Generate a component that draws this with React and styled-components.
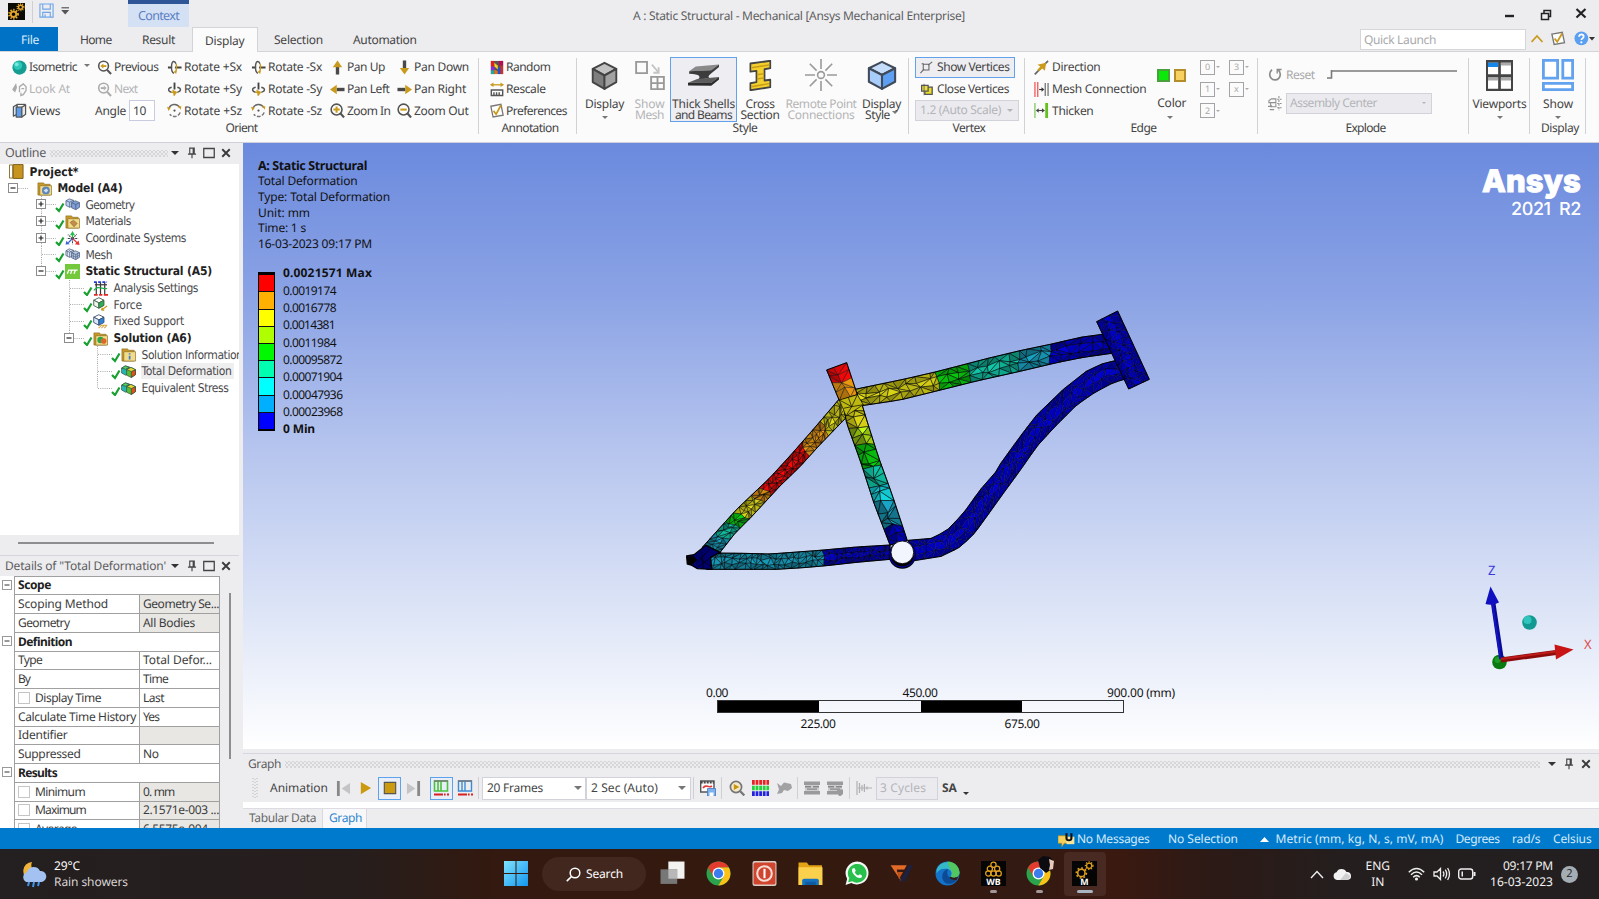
import React, { useLayoutEffect, useRef, useState } from "react";
import styled, { createGlobalStyle, css } from "styled-components";

const UI = `"Noto Sans", "Open Sans", sans-serif`;
const TREE = `"DejaVu Sans Condensed", "DejaVu Sans", sans-serif`;

const GlobalStyle = createGlobalStyle`
  html, body { margin: 0; padding: 0; overflow: hidden; }
  * { box-sizing: border-box; }
  body { font-family: ${UI}; font-size: 12px; color: #444; text-rendering: geometricPrecision; }
  svg { display: block; flex: none; }
`;

/* ---------- text ---------- */
const Span = styled.span`
  display: inline-block;
  flex: none;
  white-space: nowrap;
  line-height: ${(p) => p.$lh || 12}px;
  font-size: ${(p) => p.$size || 12}px;
  font-weight: ${(p) => (p.$bold ? 700 : p.$weight || 400)};
  font-family: ${(p) => p.$font || UI};
  color: ${(p) => p.$color || "inherit"};
  word-spacing: ${(p) => p.$ws || 0}px;
  ${(p) => p.$stroke && css`-webkit-text-stroke: ${p.$stroke}px #fff;`}
`;

/* Tracks the letters so that a label takes exactly its allotted width. */
function Text({ w, children, ...rest }) {
  const ref = useRef(null);
  const [spacing, setSpacing] = useState(0);
  useLayoutEffect(() => {
    if (!w || !ref.current) return;
    const n = String(children).length;
    setSpacing((w - ref.current.getBoundingClientRect().width) / n);
  }, [w, children]);
  return (
    <Span ref={ref} style={{ letterSpacing: `${spacing}px` }} {...rest}>
      {children}
    </Span>
  );
}

/* ---------- shell ---------- */
const Window = styled.div`
  width: 1599px;
  height: 899px;
  display: flex;
  flex-direction: column;
  overflow: hidden;
  background: #ededf0;
`;
const TitleBar = styled.header`
  height: 27px;
  display: flex;
  flex: none;
  background: #ededf0;
`;
const QuickAccess = styled.div`
  width: 128px;
  display: flex;
  align-items: flex-start;
  padding: 3px 0 0 8px;
`;
const ThinLine = styled.i`
  width: 1px;
  height: ${(p) => p.$h}px;
  margin: ${(p) => p.$m || "0"};
  background: #cfcfd4;
  flex: none;
`;
const ContextTab = styled.div`
  width: 61px;
  border-top: 4px solid #2d5597;
  background: #d4e1f5;
  padding-left: 10px;
  display: flex;
  align-items: center;
`;
const TitleText = styled.div`
  flex: 1;
  padding: 6.5px 0 0 444px;
`;
const WinButtons = styled.div`
  width: 96px;
  padding-top: 7px;
`;
const TabStrip = styled.nav`
  height: 25px;
  flex: none;
  display: flex;
  border-bottom: 1px solid #d4d4d8;
`;
const Tab = styled.div`
  width: ${(p) => p.$w}px;
  padding: 1.5px 0 0 ${(p) => p.$pad}px;
  height: 25px;
  display: flex;
  align-items: center;
  ${(p) => p.$file && css`background: #0072c6; color: #dcebf8; height: 24px;`}
  ${(p) => p.$active && css`background: #fbfbfb; border: 1px solid #d4d4d8; border-bottom: 0;`}
`;
const QuickLaunch = styled.div`
  width: 166px;
  height: 21px;
  margin: 2px 5px 0 auto;
  background: #fff;
  border: 1px solid #d6d6da;
  padding-left: 3px;
  display: flex;
  align-items: center;
`;
const TabTools = styled.div`
  width: 68px;
  padding-top: 3px;
`;

/* ---------- ribbon ---------- */
const RibbonBar = styled.section`
  height: 90px;
  flex: none;
  display: flex;
  background: #fbfbfb;
`;
const Group = styled.div`
  width: ${(p) => p.$w}px;
  flex: none;
  padding-top: 4.5px;
  display: flex;
  flex-direction: column;
  position: relative;
  &::after {
    content: "";
    position: absolute;
    right: 0;
    top: 6px;
    width: 1px;
    height: 76px;
    background: #d2d2d6;
  }
`;
const GroupBody = styled.div`
  height: 65px;
  display: flex;
  padding-left: ${(p) => p.$pl || 0}px;
`;
const GroupLabel = styled.div`
  height: 13px;
  padding-left: 4px;
  display: flex;
  justify-content: center;
  align-items: center;
`;
const OrientGrid = styled.div`
  display: grid;
  grid-template-columns: 85px 70px 84px 79px 67px 74px;
  grid-template-rows: repeat(3, 21.7px);
`;
const Stack = styled.div`
  display: flex;
  flex-direction: column;
  width: ${(p) => p.$w || "auto"};
`;
const Cmd = styled.div`
  height: 21.7px;
  width: ${(p) => (p.$w ? p.$w + "px" : "auto")};
  display: flex;
  align-items: center;
  gap: ${(p) => p.$gap ?? 2}px;
  color: ${(p) => (p.$off ? "#b4b4b6" : "#444")};
  padding-left: ${(p) => p.$pl || 0}px;
  margin-left: ${(p) => p.$ml || 0}px;
  ${(p) => p.$off && css`svg { opacity: 0.6; }`}
  ${(p) => p.$on && css`background: #ededf2; outline: 1px solid #62a2ec; outline-offset: -1px; height: 21px; margin-bottom: 0.7px;`}
`;
const AngleInput = styled.div`
  width: 26px;
  height: 21px;
  margin-left: 1px;
  border: 1px solid #c9cce0;
  background: #fff;
  padding-left: 3px;
  display: flex;
  align-items: center;
`;
const BigButton = styled.div`
  width: ${(p) => p.$w}px;
  height: 65px;
  flex: none;
  display: flex;
  flex-direction: column;
  align-items: center;
  color: ${(p) => (p.$off ? "#b4b4b6" : "#444")};
  ${(p) => p.$on && css`background: #ededf2; outline: 1px solid #62a2ec; outline-offset: -1px;`}
`;
const BigIcon = styled.div`
  height: 41px;
  display: flex;
  align-items: center;
  padding-bottom: 4px;
`;
const BigLine = styled.div`
  height: 11.5px;
  display: flex;
  align-items: center;
  gap: 2px;
`;
const Arrow = styled.i`
  width: 0;
  height: 0;
  flex: none;
  margin: ${(p) => p.$m || "0"};
  border: ${(p) => p.$s || 3}px solid transparent;
  border-top: ${(p) => p.$s || 3}px solid ${(p) => p.$c || "#777"};
  border-bottom: 0;
`;
const Combo = styled.div`
  width: ${(p) => p.$w}px;
  height: ${(p) => p.$h || 21}px;
  flex: none;
  display: flex;
  align-items: center;
  justify-content: space-between;
  padding: 0 5px 0 ${(p) => p.$pl || 4}px;
  border: 1px solid #d2d2da;
  background: ${(p) => (p.$off ? "#ebebef" : "#fff")};
  color: ${(p) => (p.$off ? "#b4b4b8" : "#444")};
`;
const ColorColumn = styled.div`
  width: 43px;
  padding-top: 12.5px;
  display: flex;
  flex-direction: column;
  align-items: flex-start;
`;
const Swatches = styled.div`
  display: flex;
  gap: 4px;
  margin-bottom: 15.5px;
`;
const Swatch = styled.i`
  width: 12.5px;
  height: 12.5px;
  background: ${(p) => p.$c};
  border: 2px solid ${(p) => p.$b};
`;
const MiniGrid = styled.div`
  display: grid;
  grid-template-columns: 29px 29px;
  grid-template-rows: repeat(3, 21.7px);
  align-items: center;
`;
const Mini = styled.div`
  display: flex;
  align-items: center;
  gap: 1px;
`;
const MiniBox = styled.div`
  width: 15px;
  height: 15px;
  border: 1px solid #a4a4a6;
  display: flex;
  align-items: center;
  justify-content: center;
`;
const ExplodeRow = styled.div`
  display: flex;
  align-items: center;
  height: ${(p) => p.$h}px;
  margin-top: ${(p) => p.$mt || 0}px;
`;

/* ---------- docked panels ---------- */
const Work = styled.main`
  flex: none;
  height: 686px;
  display: flex;
  border-top: 1px solid #cfd0dc;
`;
const Side = styled.aside`
  width: 243px;
  flex: none;
  display: flex;
  flex-direction: column;
  background: #ededf0;
`;
const PanelHead = styled.div`
  height: ${(p) => p.$h || 21}px;
  width: ${(p) => p.$w || "100%"};
  flex: none;
  display: flex;
  align-items: center;
  padding-left: 5px;
  border-top: ${(p) => (p.$line ? "1px solid #d6d6e0" : "0")};
  color: #5d5d60;
`;
const Dots = styled.i`
  height: 7px;
  flex: ${(p) => (p.$w ? "none" : 1)};
  width: ${(p) => (p.$w ? p.$w + "px" : "auto")};
  margin: ${(p) => p.$m || "0 0 0 4px"};
  background-image: radial-gradient(circle, #bcbcc0 0.5px, transparent 0.9px),
    radial-gradient(circle, #bcbcc0 0.5px, transparent 0.9px);
  background-size: 4px 4px;
  background-position: 0 0, 2px 2px;
`;
const TreePane = styled.div`
  height: 371.5px;
  width: 239px;
  background: #fff;
  overflow: hidden;
`;
const TreeRow = styled.div`
  height: ${(p) => p.$h || 16.66}px;
  display: flex;
  align-items: center;
  padding-left: ${(p) => p.$level * 28}px;
`;
const TreeText = styled.div`
  margin-left: 4.5px;
  padding: 0 2px 0 1px;
  height: 16px;
  flex: none;
  display: flex;
  align-items: center;
  background: ${(p) => (p.$sel ? "#efeff0" : "transparent")};
`;
const HScroll = styled.div`
  height: 19.5px;
  flex: none;
  padding: 7px 0 0 18px;
  &::after {
    content: "";
    display: block;
    width: 196px;
    height: 2px;
    background: #8e8e90;
  }
`;
const DetailsBody = styled.div`
  flex: 1;
  display: flex;
  overflow: hidden;
`;
const DetailsTable = styled.div`
  width: 220px;
  background: #fff;
`;
const VScroll = styled.div`
  width: 2px;
  height: 166px;
  margin: 17px 0 0 9px;
  background: #8e8e90;
`;
const DetailRow = styled.div`
  height: 18.75px;
  display: grid;
  grid-template-columns: 14px 125px 81px;
  color: #3c3c3c;
`;
const Gutter = styled.div`
  display: flex;
  align-items: center;
  padding-left: 2px;
`;
const Cell = styled.div`
  border: 1px solid #a0a0a0;
  border-width: 1px 0 0 1px;
  ${(p) => p.$last && css`border-right-width: 1px;`}
  ${(p) => p.$span && css`grid-column: 2 / 4;`}
  padding-left: 3px;
  display: flex;
  align-items: center;
  overflow: hidden;
  background: ${(p) => (p.$gray ? "#e8e7e4" : "#fff")};
`;
const CheckBox = styled.i`
  width: 12px;
  height: 12px;
  flex: none;
  border: 1px solid #c4c4c4;
  margin-right: 5px;
`;

/* ---------- viewport ---------- */
const Right = styled.div`
  flex: 1;
  display: flex;
  flex-direction: column;
`;
const Viewport = styled.div`
  height: 606px;
  flex: none;
  position: relative;
  background: linear-gradient(#6b8ade 0%, #8ba3e5 25%, #b5c4ee 50%, #dbe3f6 76%, #fff 100%);
  color: #111;
`;
const Info = styled.div`
  padding: 15px 0 0 15px;
  display: flex;
  flex-direction: column;
`;
const InfoLine = styled.div`
  height: 15.6px;
  display: flex;
  align-items: center;
`;
const Legend = styled.div`
  display: flex;
  margin: 20.5px 0 0 15px;
`;
const Bands = styled.div`
  width: 17px;
  height: 159px;
  border: 1px solid #000;
  border-width: 3px 1px 2px 1px;
  display: flex;
  flex-direction: column;
  margin-top: 0;
`;
const Band = styled.i`
  flex: 1;
  background: ${(p) => p.$c};
  & + & { border-top: 1px solid #111; }
`;
const LegendLabels = styled.div`
  margin: -7.5px 0 0 8px;
  display: flex;
  flex-direction: column;
`;
const LegendLine = styled.div`
  height: 17.35px;
  display: flex;
  align-items: center;
`;
const Brand = styled.div`
  position: absolute;
  right: 18px;
  top: 21px;
  display: flex;
  flex-direction: column;
  align-items: flex-end;
  color: #fff;
`;
const CanvasItem = styled.div`
  position: absolute;
  left: ${(p) => p.$x}px;
  top: ${(p) => p.$y}px;
`;
const Ruler = styled.div`
  width: 480px;
`;
const RulerTop = styled.div`
  display: flex;
  height: 14px;
  align-items: center;
`;
const RulerBar = styled.div`
  margin: 0 0 4px 11px;
  width: 407px;
  height: 13px;
  display: flex;
  border: 1px solid #333;
  i { flex: 1; }
  i:nth-child(odd) { background: #000; }
`;
const Gap = styled.i`
  width: ${(p) => p.$w}px;
  flex: none;
`;

/* ---------- graph dock ---------- */
const GraphDock = styled.div`
  flex: 1;
  display: flex;
  flex-direction: column;
  padding-top: 4px;
`;
const AnimBar = styled.div`
  height: 28px;
  display: flex;
  align-items: center;
`;
const Toggle = styled.div`
  width: 23px;
  height: 23px;
  flex: none;
  display: flex;
  align-items: center;
  justify-content: center;
  ${(p) => p.$on && css`background: #e9eef8; outline: 1px solid #5da2ec; outline-offset: -1px;`}
`;
const WhiteBand = styled.div`
  height: 6px;
  background: #fff;
`;
const DockTabs = styled.div`
  height: 20px;
  display: flex;
  border-top: 1px solid #dcdce2;
  color: #666;
`;
const DockTab = styled.div`
  width: ${(p) => p.$w}px;
  padding: 0 0 1.5px 6px;
  display: flex;
  align-items: center;
  ${(p) => p.$on && css`background: #f8f8fa; color: #2e86cf; border: 1px solid #d8d8de; border-width: 0 1px;`}
`;

/* ---------- status and taskbar ---------- */
const StatusBar = styled.footer`
  height: 21px;
  flex: none;
  display: flex;
  align-items: center;
  background: #007acc;
  color: #d6eafb;
  padding: 1px 0 0 1058px;
`;
const Taskbar = styled.footer`
  height: 50px;
  flex: none;
  display: flex;
  background: linear-gradient(90deg, #241f20 0%, #261e1d 22%, #33190f 31%, #34190f 52%, #331a12 64%, #3a1910 70%, #2c1a16 76%, #241e1e 84%, #231f20 100%);
  color: #fff;
`;
const Weather = styled.div`
  width: 504px;
  padding: 0 0 0 20px;
  display: flex;
  align-items: center;
  gap: 7px;
`;
const TwoLines = styled.div`
  display: flex;
  flex-direction: column;
  align-items: ${(p) => p.$align || "flex-start"};
  gap: 4.5px;
`;
const SearchPill = styled.div`
  width: 104px;
  height: 34px;
  border-radius: 17px;
  margin: 8px 4px 0 14px;
  background: #42271f;
  display: flex;
  align-items: center;
  padding-left: 24px;
  gap: 5px;
`;
const TaskSlot = styled.div`
  width: ${(p) => p.$w || 45.8}px;
  height: 50px;
  display: flex;
  flex-direction: column;
  align-items: center;
  padding-top: 12px;
  gap: 4px;
`;
const Running = styled.i`
  width: ${(p) => p.$w || 7}px;
  height: 3px;
  border-radius: 2px;
  background: ${(p) => (p.$w ? "#a9b6c0" : "#a2989a")};
`;
const RunningIcon = styled.div`
  height: 25px;
  display: flex;
  align-items: flex-end;
`;
const ActiveTile = styled.div`
  width: 42px;
  height: 44px;
  margin-top: 3px;
  margin-left: 1.5px;
  border-radius: 4px;
  background: #482a22;
  display: flex;
  flex-direction: column;
  align-items: center;
  padding-top: 9px;
  gap: 4px;
`;
const Tray = styled.div`
  display: flex;
  align-items: center;
  margin-left: auto;
  padding-right: 21px;
  color: #f2f2f2;
`;
const Badge = styled.div`
  width: 17px;
  height: 17px;
  border-radius: 50%;
  background: #a3adb3;
  color: #222;
  display: flex;
  align-items: center;
  justify-content: center;
  margin-left: 8px;
`;

/* ---------- icons ---------- */
const G = "#555";
const Y = "#c99a1c";
const gear = (cx, cy, r, c, sw = 2) => (
  <g stroke={c} fill="none" strokeWidth={sw}>
    <circle cx={cx} cy={cy} r={r} />
    <circle cx={cx} cy={cy} r={r + sw * 0.9} strokeDasharray={`${r * 0.5} ${r * 0.55}`} />
  </g>
);
const cube = (a, b, c, s = "#444", w = 1) => (
  <g stroke={s} strokeWidth={w} strokeLinejoin="round">
    <path d="M8 1 15 4.4 8 8 1 4.4Z" fill={a} />
    <path d="M1 4.4 8 8V15.4L1 11.6Z" fill={b} />
    <path d="M15 4.4 8 8V15.4L15 11.6Z" fill={c} />
  </g>
);
const blocks = (a, b) => (
  <g stroke="#4a5c7c" strokeWidth=".8" strokeLinejoin="round">
    <path d="M1 4 4.5 2 9 3.5 9 9 5 11 1 9Z" fill={a} />
    <path d="M1 4 5 5.5 9 3.5M5 5.5V11" fill="none" />
    <path d="M7 6 11 4 15.5 6 15.5 11 11.5 13.5 7 11.5Z" fill={b} />
    <path d="M7 6 11.5 8 15.5 6M11.5 8V13.5" fill="none" />
  </g>
);
const folder = (inner) => (
  <g>
    <path d="M1 2H7L8 3.5H14V15H1Z" fill="#c99a2a" stroke="#8a6a1c" strokeWidth=".7" />
    <path d="M3 5H15.5V15H3Z" fill="#f1dc8c" stroke="#8a6a1c" strokeWidth=".7" />
    {inner}
  </g>
);
const ICONS = {
  gears: <g><rect width="16" height="16" fill="#0c0a05" />{gear(5.2, 10.6, 2.6, "#e0a52c", 1.8)}{gear(11.8, 4, 1.9, "#e0a52c", 1.4)}</g>,
  save: <g fill="none" stroke="#6fa5e8" strokeWidth="1.2"><path d="M1 1H15V15H1Z" /><path d="M4 1V6.5H12V1M4 15V10H12V15M6.5 12V15" /></g>,
  sphere: <g><circle cx="8" cy="8" r="7.6" fill="#159d92" /><circle cx="6.2" cy="5.8" r="4.6" fill="#2cc9bb" /><circle cx="5" cy="4.6" r="2" fill="#7fe6dc" /></g>,
  lookat: <g fill="none" stroke="#777" strokeWidth="1.4"><path d="M1 8 4 3 4.6 6 3 10Z" fill="#777" /><path d="M8 11V5L12 2 15 5V9L12 13.5 9.500 14.500V11.500M10 7 13 7" /></g>,
  views: <g stroke="#555" strokeWidth="1.3" strokeLinejoin="round"><path d="M1.5 4 5.5 1.5V12L1.5 14Z" fill="#d8e6fa" /><path d="M4.5 4.5H10.5V15H4.5Z" fill="#5a9cf0" /><path d="M10.5 4.5 14.5 2V12L10.5 15Z" fill="#e8e8ea" /><path d="M5.5 1.5H14.5" /></g>,
  prev: <g fill="none" stroke={G} strokeWidth="1.7"><circle cx="7" cy="6.5" r="5.2" fill="#fff" /><path d="M10.8 10.5 15 15" strokeWidth="2.2" /><path d="M10 6.5H6" stroke={Y} strokeWidth="2" /><path d="M3.6 6.5 6.8 3.8V9.2Z" fill={Y} stroke="none" /></g>,
  next: <g fill="none" stroke="#777" strokeWidth="1.7"><circle cx="7" cy="6.5" r="5.2" /><path d="M10.8 10.5 15 15" strokeWidth="2.2" /><path d="M4 6.5H8" strokeWidth="2" /><path d="M10.4 6.5 7.2 3.8V9.2Z" fill="#888" stroke="none" /></g>,
  rotx: <g fill="none" strokeWidth="1.5"><path d="M1 8H5.5M8.5 8H15.5" stroke="#444" strokeWidth="2" /><path d="M9.5 4C8.5.6 5.8.6 5 4.6 4.4 9 5 13 7.4 14.2" stroke={G} /><path d="M9.8 4C10.6 7 10 12 8.6 13.4" stroke={Y} /><path d="M10.6 11 7 12.4 9.8 15Z" fill={Y} /></g>,
  roty: <g fill="none" strokeWidth="1.5"><path d="M8 .6V8" stroke="#444" strokeWidth="2" /><path d="M5 5.6C.6 6.6.6 9.6 5 11" stroke={G} /><path d="M11 5.6C15.6 6.8 15.4 9.8 11 11" stroke={G} /><path d="M4.6 11H10" stroke={Y} /><path d="M6 8.6 10.6 11 7.5 14.8Z" fill={Y} stroke={Y} strokeWidth=".6" /></g>,
  rotz: <g fill="none" strokeWidth="1.6"><path d="M2 6A6.3 6.3 0 0 1 13.6 5" stroke="#666" /><path d="M14 10A6.3 6.3 0 0 1 3 12" stroke="#777" strokeDasharray="4 1.6" /><circle cx="8" cy="8" r="1.2" fill="#555" stroke="none" /><path d="M0 4 4 5 1.6 8.4Z" fill={Y} /><path d="M11.6 3 15.4 3.6 14.6 7.2Z" fill={Y} /></g>,
  up: <g><path d="M6.2 7H9.8V15.5H6.2Z" fill="#4a4a4a" /><path d="M8 .5 13 7.6H3Z" fill={Y} /></g>,
  down: <g><path d="M6.2 .5H9.8V9H6.2Z" fill="#4a4a4a" /><path d="M8 15.5 13 8.4H3Z" fill={Y} /></g>,
  left: <g><path d="M7 6.2H15.5V9.8H7Z" fill="#4a4a4a" /><path d="M0 8 7.2 3V13Z" fill={Y} /></g>,
  right: <g><path d="M.5 6.2H9V9.8H.5Z" fill="#4a4a4a" /><path d="M16 8 8.8 3V13Z" fill={Y} /></g>,
  zin: <g fill="none" stroke={G} strokeWidth="1.7"><circle cx="7" cy="7" r="5.8" fill="#fff" /><path d="M11 11 15 15.4" strokeWidth="2.3" /><path d="M3.6 7H10.4M7 3.6V10.4" stroke={Y} strokeWidth="2.2" /></g>,
  zout: <g fill="none" stroke={G} strokeWidth="1.7"><circle cx="7" cy="7" r="5.8" fill="#fff" /><path d="M11 11 15 15.4" strokeWidth="2.3" /><path d="M3.6 7H10.4" stroke={Y} strokeWidth="2.2" /></g>,
  random: <g><rect x="1" y="1" width="14" height="14" fill="#555" /><path d="M1 1H5V7H1Z" fill="#e02020" /><path d="M1 7H5V11H1Z" fill="#8a2be2" /><path d="M1 11H5V15H1Z" fill="#2a9" /><path d="M5 3 9 6V10L5 7Z" fill="#f0d020" /><path d="M5 10 9 12V15H5Z" fill="#e07020" /><path d="M10 1H15V6H10Z" fill="#b01050" /><path d="M9 8H12V15H9Z" fill="#2050d0" /><path d="M12 6H15V15H12Z" fill="#cc3030" /></g>,
  rescale: <g fill="none"><path d="M1 3H15" stroke={Y} strokeWidth="1.4" /><path d="M0 3 4 .6V5.4ZM16 3 12 .6V5.4Z" fill={Y} /><path d="M1.5 8.5H14.5V14.5H1.5ZM4.5 14V11M7.5 14V11M10.5 14V11" stroke={G} strokeWidth="1.6" /></g>,
  prefs: <g fill="none"><path d="M1 3.5 12.5 1.5 15 13 3.5 15Z" stroke="#777" strokeWidth="1.5" fill="#fff" /><path d="M4 8.5 7 12 12.5 2.5" stroke={Y} strokeWidth="2" /></g>,
  bigcube: cube("#c2c2c2", "#7e7e7e", "#a2a2a2", "#444", 1.1),
  bluecube: cube("#c5ddfb", "#a9cdfb", "#5d9ff2", "#404a58", 1.1),
  showmesh: <g fill="none" stroke="#999" strokeWidth="1"><path d="M.6 1H6.4V7H.6ZM8.6 9H15.4V15.6H8.6ZM12 9V15.6M8.6 12.3H15.4" /><path d="M9 2.5 12.4 6.4M12.6 3.8V6.8H9.8" stroke="#c4c4c4" /></g>,
  beam: <g><path d="M4 2.200 16 1 12 4.600 .6 5.200Z" fill="#8a8a8a" /><path d="M.6 5.200 12 4.600 16 1V2.600L11.600 7C10.400 8.200 10.400 8.800 11 9.600L5 10.800C6.800 8.800 6.400 7 .6 6.800Z" fill="#3c3c3c" /><path d="M0 12.600 4.800 10.200 16 9 11.800 12.800Z" fill="#5c5c5c" /><path d="M0 12.600 11.800 12.800 16 9V10.600L12 14.600 0 14.400Z" fill="#2c2c2c" /></g>,
  cross: <g stroke="#444" strokeWidth="1" strokeLinejoin="round"><path d="M2 1.8 13.8.4V4.2L10.4 4.8V10.6L13.8 10.2V14L2 15.6V12L5.6 11.4V5.6L2 6Z" fill="#f2cf2c" /><path d="M2.6 4 13 2.6M5.8 7.6 10.2 7M5.8 9.8 10.2 9.2M2.6 13.8 13 12.2" stroke="#c79b15" strokeWidth=".7" /></g>,
  remote: <g stroke="#9a9a9a" fill="none" strokeWidth=".8"><circle cx="8" cy="8" r="1.7" /><path d="M8 0V5M8 11V16M0 8H5M11 8H16M2.4 2.4 5.8 5.8M10.2 10.2 13.6 13.6M13.6 2.4 10.2 5.8M2.4 13.6 5.8 10.2" /></g>,
  showv: <g fill="none" stroke="#666" strokeWidth="1.3"><path d="M4 4H11V11H4Z" /><path d="M10 5 15 1M.5 15 5 10M2 3.5H4.5" /></g>,
  closev: <g><path d="M6 5H15V14H6Z" fill="#e9dc28" stroke="#555" strokeWidth="1.6" /><path d="M2 3H10V10H2Z" fill="#eee04a" stroke="#555" strokeWidth="1.6" /><path d="M5 1V15" stroke="#555" /></g>,
  direction: <g><path d="M.8 15.4 15 1" stroke="#666" strokeWidth="1.8" /><path d="M13 3 11.6 11.4 8.8 9 5.4 12 3.6 10.4 6.8 7 3.6 5Z" fill={Y} /></g>,
  meshcon: <g><path d="M1 0V16M4 0V16" stroke="#f05050" strokeWidth="1.3" /><path d="M12 1V15M15 1V15" stroke="#777" strokeWidth="1.4" /><path d="M5.5 8H9" stroke="#333" strokeWidth="1.2" /><path d="M11 8 8 5.5V10.5Z" fill="#333" /></g>,
  thicken: <g><path d="M1 0V16" stroke="#6fc040" strokeWidth="1.2" /><path d="M13.5 0V16" stroke="#64c01c" strokeWidth="3" /><path d="M3 8H11" stroke="#444" strokeWidth="1.2" /><path d="M2 8 5 5.5V10.5ZM11.5 8 8.5 5.5V10.5Z" fill="#444" /></g>,
  reset: <g fill="none" stroke="#8a8a8a" strokeWidth="1.9"><path d="M11.8 3.2A6 6 0 1 1 4.6 2.9" /><path d="M10.5 7V2.6H15.5" strokeWidth="1.5" /></g>,
  assembly: <g fill="none" stroke="#8f8f8f" strokeWidth="1.2"><path d="M1 5 4 3H9V7H1ZM3 7.500V11.500H9V8M2 14.500H7M0 11H4.500M4.500 11 2.500 9" /><path d="M12.500 0V16" strokeDasharray="2.5 1.4" /><path d="M10.500 3.500H16M10.500 8H16M10.500 12.500H16" strokeDasharray="2 1" /></g>,
  viewports: <g><rect x="0" y="0" width="16" height="16" fill="#444" /><path d="M1.2 1.4H7.2V7.4H1.2ZM8.8 1.4H14.8V7.4H8.8ZM1.2 9H7.2V14.8H1.2ZM8.8 9H14.8V14.8H8.8Z" fill="#fff" /><path d="M1.2 1.4H7.2V3.6H1.2Z" fill="#1687ea" /><path d="M8.8 1.4H14.8V2.8H8.8ZM1.2 9H7.2V10.6H1.2ZM8.8 9H14.8V10.6H8.8Z" fill="#aaa" /></g>,
  showpanel: <g fill="#fff" stroke="#62a2ee" strokeWidth="1.4"><path d="M.7.7H7.8V9.6H.7ZM10.4.7H15.3V9.6H10.4ZM.7 12.2H15.3V15.3H.7Z" /></g>,
  help: <g><circle cx="8" cy="8" r="7.5" fill="#5a9ff0" /><path d="M5.5 6.2C5.5 2.8 10.7 3 10.5 6.2 10.3 8 8 8 8 9.8" fill="none" stroke="#fff" strokeWidth="1.9" /><circle cx="8" cy="12.3" r="1.2" fill="#fff" /></g>,
  pin: <g fill="none" stroke="#444" strokeWidth="1.5"><path d="M5 1.5H11V9H5ZM9.6 1.5V9M2.6 9.5H13.4M8 9.5V15" /></g>,
  max: <path d="M1 2H15V14H1Z" fill="none" stroke="#444" strokeWidth="1.7" />,
  close: <path d="M2 2 14 14M14 2 2 14" stroke="#3a3a3a" strokeWidth="3" />,
  book: <g><path d="M.5 1H4V15H.5Z" fill="#fff" stroke="#8a6a1c" /><path d="M4.5 .6H15V15.4H4.5Z" fill="#c6941f" stroke="#7a5c18" /></g>,
  model: folder(<g><circle cx="9.5" cy="10" r="4.2" fill="#5e86b8" /><path d="M7 10 10 8 12 10 9.6 12.4Z" fill="#cfe0f4" /></g>),
  geom: blocks("#b9cdf0", "#7f9fd8"),
  material: folder(<path d="M5.5 9 9 6.6 13 10 9.6 13.6Z" fill="#c88c4a" stroke="#7a5a2a" strokeWidth=".6" />),
  coord: <g strokeWidth="1.3" fill="none"><path d="M8 8V3" stroke="#1cbf4c" /><path d="M8 0 10.600 4.500H5.400Z" fill="#1cbf4c" /><path d="M8 8 3 4M8 8H2M8 8 12.500 3.500M8 8H14M8 8V14" stroke="#444" strokeDasharray="2 .8" strokeWidth="1.1" /><path d="M8 8 13 12.500" stroke="#e43434" /><path d="M15.500 15 10.500 14 14.500 10Z" fill="#e43434" /><path d="M8 8 3.500 12.500" stroke="#3c62d8" /><path d="M.5 14.500 1.500 10.500 5 14Z" fill="#3c62d8" /></g>,
  mesh: <g>{blocks("#dfe8f6", "#b5c8e4")}<path d="M2.5 4.5V10M4 3 8.5 7M9 7V12.4M13.4 7V12.4M7 9 11.5 10.8 15.5 8.6" stroke="#4a5c7c" strokeWidth=".6" fill="none" /></g>,
  statics: <g><rect width="16" height="16" fill="#74c83c" /><path d="M2.5 10.5 4 6.5H13.5M6 10.5 7.2 7M9.6 10.5 11 7" stroke="#fff" strokeWidth="1.4" fill="none" /></g>,
  analysis: <g fill="none" strokeWidth="1.3"><path d="M3.500 1V14M8 1V14M12.500 1V14" stroke="#3a3a3a" /><path d="M2 4H15" stroke="#3a3a3a" /><path d="M1 10C5 4 10 9 15 8" stroke="#18b048" /><path d="M1 14.8H5M6.500 14.8H10M11.500 14.8H16" stroke="#e02a2a" strokeWidth="2" /><path d="M1 1.200H15" stroke="#2038d0" strokeWidth="2" strokeDasharray="3 1.5" /></g>,
  force: <g><g transform="scale(.78)">{cube("#fff", "#eef4ee", "#2fae50", "#3d5c48", 1.2)}</g><path d="M9 14 15 9.5M9 14H12M9 14 10 11.4" stroke={Y} strokeWidth="1.3" /></g>,
  fixed: <g><g transform="scale(.78)">{cube("#fff", "#d8e8fa", "#2c84d8", "#3d4c6c", 1.2)}</g><path d="M6 15 9 12M9 15 12 12M12 15 15 12M8 12H15" stroke="#d8a23c" strokeWidth="1.1" /></g>,
  solution: folder(<g><circle cx="8" cy="9.6" r="3.4" fill="#2aa84e" /><circle cx="11.4" cy="10.6" r="3" fill="#e0672a" /></g>),
  solinfo: folder(<path d="M9.2 6.6V8M9.2 9.2V13.4" stroke="#3a78d0" strokeWidth="1.8" />),
  deform: <g stroke="#2c4a3c" strokeWidth=".7" strokeLinejoin="round"><path d="M.6 4.4 4.6 2 9 3.4V9.6L5 12 .6 9.6Z" fill="#28b4b4" /><path d="M4.6 2 9 3.4 5 5.6.6 4.4Z" fill="#54d060" /><path d="M6 6 10.6 3.6 15.4 6V11.4L11 14.4 6 12Z" fill="#58c030" /><path d="M11 8 15.4 6V11.4L11 14.4Z" fill="#e0501c" /><path d="M6 6 10.6 3.6 15.4 6 11 8Z" fill="#e6d832" /></g>,
  first: <g><path d="M1 0H4V16H1Z" fill="#888" /><path d="M15 2V14L6 8Z" fill="#c4c4c6" /></g>,
  last: <g><path d="M12 0H15V16H12Z" fill="#888" /><path d="M1 2V14L10 8Z" fill="#c4c4c6" /></g>,
  play: <path d="M3 1V15L14 8Z" fill="#cc9a10" />,
  stop: <path d="M1.5 1.5H14.5V14.5H1.5Z" fill="#cc9a10" stroke="#555" strokeWidth="1.3" />,
  frameG: <g fill="none"><path d="M1.5 1H14.5V11H1.5ZM5 1V11M8 1V11" stroke="#49c43c" strokeWidth="1.6" /><path d="M1 1H15" stroke="#777" strokeWidth="1.400" /><path d="M1 14.5H10M11 14.5H12.6M14 14.5H16" stroke="#d82020" strokeWidth="2" /></g>,
  frameB: <g fill="none"><path d="M1.5 1H14.5V11H1.5ZM5 1V11M8 1V11" stroke="#3d8ad4" strokeWidth="1.4" /><path d="M1 1H15" stroke="#777" strokeWidth="1.400" /><path d="M1 14.5H10M11 14.5H12.6M14 14.5H16" stroke="#d82020" strokeWidth="2" /></g>,
  exportv: <g><path d="M.7 1H14V12H.7Z" fill="#fff" stroke="#555" strokeWidth="1.4" /><path d="M.7 2.4H14" stroke="#444" strokeWidth="2.4" strokeDasharray="2 1" /><path d="M3 8C6 3 8 9 12 6" stroke="#e03a3a" strokeWidth="1.6" fill="none" /><path d="M7.5 8.5H15.5V16H7.5Z" fill="#7db2f2" stroke="#4678b8" strokeWidth=".8" /><path d="M9.5 12.5H13.5V16H9.5Z" fill="#fff" /></g>,
  zoomplay: <g><circle cx="7" cy="7" r="5.6" fill="#f4e9c8" stroke="#777" strokeWidth="1.7" /><path d="M11 11 15.3 15.4" stroke="#777" strokeWidth="2.3" /><path d="M4.8 4V10L10.4 7Z" fill="#c9940c" /></g>,
  rgb: <g strokeWidth="4.6" strokeDasharray="2.6 .8"><path d="M0 2.4H16" stroke="#e82222" /><path d="M0 8H16" stroke="#22d43c" /><path d="M0 13.6H16" stroke="#2222e0" /></g>,
  scope: <path d="M1 3 5 6 8 2.500 15 4 16 8 12 11 8 10 6 13 1 14 3 9.500Z" fill="#a2a2a4" />,
  list1: <g fill="#9a9a9c"><path d="M0 1.500H16V5H0ZM0 11H16V14.500H0Z" /><path d="M1 6H7V7.4H1ZM9 6H15V7.4H9ZM3 8.4H13V9.8H3Z" fill="#7c7c7e" /><path d="M1 5H15V11H1Z" opacity=".4" /></g>,
  list2: <g fill="#9a9a9c"><path d="M0 1.500H16V5H0ZM0 11H10V14.500H0Z" /><path d="M1 6H7V7.4H1ZM9 6H15V7.4H9ZM3 8.4H13V9.8H3Z" fill="#7c7c7e" /><path d="M1 5H15V11H1Z" opacity=".4" /><path d="M10 9.500H16V14L13 16.500 10 14Z" /></g>,
  wave: <g stroke="#b0b0b2" fill="none"><path d="M1 1V15M2 8H16M3.5 3V13M6 5V11M8.4 4V12M11 6.4V9.6" strokeWidth="1.2" /></g>,
  message: <g><path d="M0 4H9V12H6L3.6 15.6V12H0Z" fill="#f3d05c" stroke="#b08c1c" strokeWidth=".7" /><path d="M8 5H15.4V13H8Z" fill="#f8e49a" /><path d="M8 1.4V6.6C8 9.6 12.6 9.6 12.6 6.6V1.4" stroke="#111" fill="none" strokeWidth="2" /></g>,
};
function Icon({ n, s = 15, w, h }) {
  return (
    <svg width={w || s} height={h || s} viewBox="0 0 16 16" preserveAspectRatio="none">
      {ICONS[n]}
    </svg>
  );
}

/* ---------- frame model ---------- */
function rng(seed) {
  let s = seed;
  return () => ((s = (s * 16807) % 2147483647) / 2147483647);
}
function sample(pts, t) {
  const lens = pts.slice(1).map((p, i) => Math.hypot(p[0] - pts[i][0], p[1] - pts[i][1]));
  let d = t * lens.reduce((a, b) => a + b, 0);
  for (let i = 0; i < lens.length; i++) {
    if (d <= lens[i] || i === lens.length - 1) {
      const k = d / lens[i];
      return [pts[i][0] + (pts[i + 1][0] - pts[i][0]) * k, pts[i][1] + (pts[i + 1][1] - pts[i][1]) * k];
    }
    d -= lens[i];
  }
}
const shade = (hex, k) =>
  "#" + [1, 3, 5].map((i) => Math.min(255, Math.round(parseInt(hex.slice(i, i + 2), 16) * k)).toString(16).padStart(2, "0")).join("");

function Tube({ a, b, n, bands, seed, rows = 3, line = 1.8, lineOpacity = 0.85, vary = 0.14 }) {
  const r = rng(seed);
  const nodes = [];
  for (let i = 0; i <= n; i++) {
    const row = [];
    for (let j = 0; j <= rows; j++) {
      const edge = j === 0 || j === rows;
      const t = Math.min(1, Math.max(0, (i + (i > 0 && i < n ? (r() - 0.5) * 0.75 : 0)) / n));
      const k = edge ? j / rows : (j + (r() - 0.5) * 0.6) / rows;
      const p = sample(a, t);
      const q = sample(b, t);
      row.push([p[0] + (q[0] - p[0]) * k, p[1] + (q[1] - p[1]) * k]);
    }
    nodes.push(row);
  }
  const tris = [];
  for (let i = 0; i < n; i++) {
    const color = bands.find((x) => (i + 0.5) / n <= x[0])[1];
    for (let j = 0; j < rows; j++) {
      const side = rows > 2 && (j === 0 || j === rows - 1) ? 0.88 : rows === 2 && j === 0 ? 0.84 : 1.08;
      const [p, q, s, u] = [nodes[i][j], nodes[i + 1][j], nodes[i + 1][j + 1], nodes[i][j + 1]];
      const pair = r() > 0.5 ? [[p, q, s], [p, s, u]] : [[p, q, u], [q, s, u]];
      pair.forEach((tri) => tris.push([tri, shade(color, side + (r() - 0.5) * vary * 2)]));
    }
  }
  const outline = nodes.map((x) => x[0]).concat(nodes.map((x) => x[rows]).reverse());
  return (
    <g strokeLinejoin="round">
      {tris.map(([tri, c], i) => (
        <path key={i} d={`M${tri.map((p) => p.map((v) => v.toFixed(1)).join(" ")).join("L")}Z`} fill={c} stroke="#000" strokeOpacity={lineOpacity} strokeWidth={line} />
      ))}
      <path d={`M${outline.map((p) => p.join(" ")).join("L")}Z`} fill="none" stroke="#000" strokeWidth="3" />
    </g>
  );
}
const C = { r: "#d80808", o: "#cc8410", y: "#bdb812", l: "#98c412", g: "#08b00c", t: "#0ea68c", c: "#12c4cc", s: "#14859f", b: "#0000b2" };

function BikeFrame() {
  return (
    <svg width="500" height="290" viewBox="0 0 1500 870">
      <Tube seed={11} n={34} line={1.5} lineOpacity={0.7}
        a={[[1345, 180], [1300, 190], [1250, 213], [1180, 268], [1100, 345], [1050, 410], [985, 500], [978, 515], [930, 570], [880, 640], [830, 692], [785, 715], [715, 721]]}
        b={[[1370, 236], [1330, 248], [1275, 277], [1220, 315], [1150, 385], [1100, 440], [1050, 512], [1000, 580], [960, 636], [915, 698], [875, 738], [820, 768], [720, 784]]}
        bands={[[1, C.b]]} />
      <Tube seed={5} n={25}
        a={[[555, 268], [700, 238], [800, 215], [950, 176], [1050, 152], [1150, 131], [1230, 112], [1320, 100]]}
        b={[[575, 317], [690, 300], [820, 268], [920, 243], [1050, 214], [1160, 188], [1240, 172], [1325, 160]]}
        bands={[[0.335, C.y], [0.45, C.g], [0.65, C.t], [0.77, C.s], [1, C.b]]} />
      <Tube seed={9} n={11} rows={3} line={1.6} lineOpacity={0.7} a={[[1280, 65], [1376, 267]]} b={[[1343, 33], [1438, 238]]} bands={[[1, C.b]]} />
      <Tube seed={21} n={30} rows={3} line={1.7}
        a={[[118, 759], [220, 760], [300, 762], [450, 751], [560, 741], [660, 735]]}
        b={[[110, 808], [320, 808], [400, 803], [470, 797], [560, 787], [660, 778]]}
        bands={[[0.62, C.s], [1, C.b]]} />
      <Tube seed={31} n={34} rows={3} line={1.6}
        a={[[512, 292], [430, 388], [365, 462], [300, 533], [200, 628], [150, 683], [97, 742]]}
        b={[[534, 347], [447, 437], [390, 500], [330, 558], [243, 652], [195, 700], [148, 760]]}
        bands={[[0.16, C.y], [0.28, C.o], [0.59, C.r], [0.66, C.o], [0.75, C.y], [0.82, C.g], [0.92, C.t], [1, C.s]]} />
      <Tube seed={43} n={17} rows={2} line={2}
        a={[[520, 315], [530, 370], [570, 480], [612, 610], [660, 735]]}
        b={[[572, 300], [590, 360], [625, 470], [665, 580], [712, 722]]}
        bands={[[0.15, C.y], [0.28, C.l], [0.45, C.g], [0.6, C.t], [0.72, C.c], [0.86, C.s], [1, C.b]]} vary={0.2} />
      <Tube seed={55} n={4} rows={2} a={[[470, 210], [508, 302]]} b={[[530, 188], [562, 284]]} bands={[[0.5, C.r], [1, C.o]]} vary={0.08} lineOpacity={0.6} />
      <path d="M508 300 562 284 580 314 528 348Z" fill={C.y} stroke="#000" strokeWidth="2" />
      <path d="M508 300 545 320 562 284M528 348 545 320 580 314M520 325 545 320M535 292 545 320" fill="none" stroke="#000" strokeWidth="2" />
      <path d="M50 768 72 764 108 736 150 757 122 772 125 808 82 806 66 796 52 792Z" fill="#00006c" stroke="#000" strokeWidth="4" />
      <path d="M50 770 70 768 82 780 66 795 52 791Z" fill="#000" />
      <path d="M80 790 120 745M85 770 122 800M95 755 100 805M125 772 85 800" stroke="#000" strokeWidth="2" />
      <circle cx="697" cy="765" r="41" fill="#000" />
      <circle cx="697" cy="764" r="37" fill="none" stroke="#00009c" strokeWidth="4" />
      <circle cx="697" cy="757" r="34" fill="#f2f5fd" stroke="#000" strokeWidth="2.500" />
    </svg>
  );
}

function Triad() {
  return (
    <svg width="130" height="120" viewBox="0 0 130 120">
      <circle cx="29.5" cy="92" r="7.3" fill="#087a10" />
      <circle cx="27.5" cy="90" r="3" fill="#1c9c24" />
      <path d="M31.5 89 23 32" stroke="#0a0a98" strokeWidth="4.6" />
      <path d="M30.5 89 22.2 32" stroke="#1414c4" strokeWidth="1.8" />
      <path d="M20.5 16.5 29 32.5Q22 36 15.5 34Z" fill="#1010c0" />
      <path d="M31 90 86 82.5" stroke="#8c0a0a" strokeWidth="5" />
      <path d="M31 89 86 81.5" stroke="#c01c1c" strokeWidth="1.8" />
      <path d="M103.5 79.5 84.5 74.5 86 89.5Z" fill="#c81414" />
      <circle cx="59.5" cy="52.5" r="7.3" fill="#129a92" />
      <circle cx="57.5" cy="50" r="4" fill="#30c4bc" />
    </svg>
  );
}

/* ---------- taskbar drawings ---------- */
function Chrome() {
  return (
    <svg width="25" height="25" viewBox="0 0 48 48">
      <circle cx="24" cy="24" r="23" fill="#2ba24c" />
      <path d="M24 1A23 23 0 0 1 43.9 12.5H24L14 29.8 4.1 12.5A23 23 0 0 1 24 1Z" fill="#e33b2e" />
      <path d="M43.9 12.5A23 23 0 0 1 24 47L34 29.8 34 18 24 12.5Z" fill="#fbc116" />
      <circle cx="24" cy="24" r="11.5" fill="#fff" />
      <circle cx="24" cy="24" r="9" fill="#3b7ded" />
    </svg>
  );
}
const TASK_TEXT = { textAnchor: "middle", fontFamily: "Noto Sans, sans-serif", fontWeight: 700, fontSize: 17, fill: "#fff" };
function TaskIcon({ n }) {
  if (n === "chrome") return <Chrome />;
  const art = {
    tasks: <g><path d="M16 1H47V34H16Z" fill="#f2f2f2" /><path d="M1 16H33V44H1Z" fill="#777" /><path d="M16 16H33V34H16Z" fill="#b8b8b8" /></g>,
    power: <g><rect x="1" y="0" width="46" height="48" rx="4" fill="#d8cfc8" /><rect x="3" y="3" width="42" height="42" rx="3" fill="#d0452e" /><circle cx="24" cy="24" r="14" fill="none" stroke="#f3dcd6" strokeWidth="4" /><path d="M24 15V33" stroke="#fff" strokeWidth="4" /></g>,
    folder: <g><path d="M1 3H17L21 8H46V46H1Z" fill="#e3a317" /><path d="M1 12H47V46H1Z" fill="#fbd04c" /><path d="M8 46V37Q8 34 12 34H36Q40 34 40 37V46Z" fill="#1572c0" /><path d="M14 40H34V46H14Z" fill="#0f5a9e" /></g>,
    whatsapp: <g><path d="M3 46 6 34A22 22 0 1 1 14 42Z" fill="#f4f8f4" /><path d="M8 41 10 33A18 18 0 1 1 16 39Z" fill="#28c04c" /><path d="M17 14C14 17 15 21 19 26 24 32 29 34 33 32 36 29 35 28 30 25.5L27.5 28C24 26.5 22 24 20.8 21.5L22.5 18.5 20.5 14Z" fill="#fff" /></g>,
    vee: <g><path d="M3 8H34L29 17H15L24 40Z" fill="#e46a28" /><path d="M38 8H46L30 40H24L22 36Z" fill="#1c2140" /><path d="M15 17H29L20 33Z" fill="#33190f" /><path d="M17 21H27L19 35Z" fill="#c4521c" /></g>,
    edge: <g><circle cx="24" cy="24" r="23" fill="#1472c8" /><path d="M3 18C8 -4 44 -4 47 22 47 32 36 34 30 30 34 26 32 16 22 15 12 14 6 18 3 24Z" fill="#35b8c8" /><path d="M24 1C38 1 47 12 47 22 47 32 36 34 30 30 34 26 33 18 28 14Z" fill="#52c760" /><path d="M14 30C14 20 22 15 26 16 20 22 24 36 42 36 34 48 14 46 14 30Z" fill="#0c4a94" /><path d="M30 30C36 34 47 32 47 24L42 36C36 37 30 35 28 32Z" fill="#33190f" /></g>,
    wb: <g><rect width="48" height="48" fill="#050505" /><g fill="none" stroke="#e0a020" strokeWidth="2.4"><circle cx="24" cy="7" r="5" /><circle cx="17" cy="15" r="5" /><circle cx="31" cy="15" r="5" /><circle cx="14" cy="24" r="5" /><circle cx="24" cy="24" r="5" /><circle cx="34" cy="24" r="5" /></g><text x="24" y="47" {...TASK_TEXT}>WB</text></g>,
    mech: <g><rect width="48" height="48" fill="#050505" />{gear(18, 23, 7, "#e0a020", 3)}{gear(33, 9, 5, "#e0a020", 2.4)}<text x="24" y="47" {...TASK_TEXT}>M</text></g>,
  };
  return <svg width="25" height="25" viewBox="0 0 48 48">{art[n]}</svg>;
}

/* ---------- data ---------- */
const ORIENT = [
  ["sphere", "Isometric", 48, "drop"], ["prev", "Previous", 44.5], ["rotx", "Rotate +Sx", 58], ["rotx", "Rotate -Sx", 54], ["up", "Pan Up", 38], ["down", "Pan Down", 55],
  ["lookat", "Look At", 41, "off"], ["next", "Next", 23.5, "off"], ["roty", "Rotate +Sy", 58], ["roty", "Rotate -Sy", 54], ["left", "Pan Left", 42.5], ["right", "Pan Right", 52],
  ["views", "Views", 31.5], ["angle"], ["rotz", "Rotate +Sz", 58], ["rotz", "Rotate -Sz", 54], ["zin", "Zoom In", 43.5], ["zout", "Zoom Out", 54.5],
];
const TREE_ROWS = [
  { l: 1, e: "-", i: "model", t: "Model (A4)", w: 65, b: 1, root: 1 },
  { l: 1, e: "+", c: 1, i: "geom", t: "Geometry", w: 49 },
  { l: 1, e: "+", c: 1, i: "material", t: "Materials", w: 45.5 },
  { l: 1, e: "+", c: 1, i: "coord", t: "Coordinate Systems", w: 100.5 },
  { l: 1, c: 1, i: "mesh", t: "Mesh", w: 26.5 },
  { l: 1, e: "-", c: 1, i: "statics", t: "Static Structural (A5)", w: 126.5, b: 1, end: 1 },
  { l: 2, c: 1, i: "analysis", t: "Analysis Settings", w: 84.5 },
  { l: 2, c: 1, i: "force", t: "Force", w: 28.5 },
  { l: 2, c: 1, i: "fixed", t: "Fixed Support", w: 70.5 },
  { l: 2, e: "-", c: 1, i: "solution", t: "Solution (A6)", w: 78, b: 1, end: 1 },
  { l: 3, c: 1, i: "solinfo", t: "Solution Information", w: 101 },
  { l: 3, c: 1, i: "deform", t: "Total Deformation", w: 90, sel: 1 },
  { l: 3, c: 1, i: "deform", t: "Equivalent Stress", w: 87, end: 1 },
];
const DETAILS = [
  ["Scope", 33],
  ["Scoping Method", 90, "Geometry Se...", 76, "g"],
  ["Geometry", 51.5, "All Bodies", 52, "g"],
  ["Definition", 54],
  ["Type", 24, "Total Defor...", 69],
  ["By", 12, "Time", 25],
  ["Display Time", 66, "Last", 21, "c"],
  ["Calculate Time History", 118, "Yes", 16],
  ["Identifier", 49.5, "", 0, "g"],
  ["Suppressed", 62.5, "No", 15.5],
  ["Results", 39],
  ["Minimum", 50, "0. mm", 31.5, "gc"],
  ["Maximum", 51, "2.1571e-003 ...", 76, "gc"],
  ["Average", 42, "6.5575e-004 ...", 76, "gc"],
];
const BANDS = ["#ff0000", "#ffb000", "#ffff00", "#b0ff00", "#00f800", "#00ffb0", "#00ffff", "#00b0ff", "#0000ff"];
const VALUES = [["0.0021571 Max", 89, 1], ["0.0019174", 53], ["0.0016778", 53], ["0.0014381", 52], ["0.0011984", 53], ["0.00095872", 59], ["0.00071904", 59], ["0.00047936", 59.5], ["0.00023968", 59.5], ["0 Min", 32, 1]];

/* ---------- parts ---------- */
function Branch({ row }) {
  const { e, c, root, end } = row;
  return (
    <svg width="37" height="16.66" viewBox="0 0 37 16.66">
      <g stroke="#a8a8a8" strokeDasharray="1 1.2" fill="none">
        {!root && <path d={end ? "M13.5 0V8" : "M13.5 0V16.66"} />}
        <path d="M14 8.5H28" />
      </g>
      {e && (
        <g>
          <rect x="8.5" y="3.5" width="9" height="9" fill="#fff" stroke="#8c8c8c" />
          <path d={e === "+" ? "M10.5 8H15.5M13 5.5V10.5" : "M10.5 8H15.5"} stroke="#222" strokeWidth="1.2" />
        </g>
      )}
      {c && <path d="M28 12 31 15 35.5 7.5" fill="none" stroke="#18a030" strokeWidth="2.2" />}
    </svg>
  );
}

function HeadButtons({ noMax }) {
  return (
    <>
      <Arrow $s={4} $c="#333" $m={noMax ? "0 7px 0 5px" : "0 7px 0 3px"} />
      <Icon n="pin" s={12} />
      <Gap $w={noMax ? 6 : 5} />
      {!noMax && <><Icon n="max" w={12} h={12} /><Gap $w={6} /></>}
      <Icon n="close" s={10} />
    </>
  );
}

function Big({ w, icon, iw, ih, lines, ws, on, off, arrow }) {
  return (
    <BigButton $w={w} $on={on} $off={off}>
      <BigIcon><Icon n={icon} w={iw} h={ih} /></BigIcon>
      {lines.map((t, i) => (
        <BigLine key={t}>
          <Text w={ws[i]} $lh={11}>{t}</Text>
          {arrow === "side" && i === 1 && <Arrow $m="-4px 0 0" />}
        </BigLine>
      ))}
      {arrow === "below" && <Arrow $m="7px 0 0" />}
    </BigButton>
  );
}

function Ribbon() {
  return (
    <RibbonBar>
      <Group $w={479}>
        <GroupBody $pl={12}>
          <OrientGrid>
            {ORIENT.map(([icon, t, w, mode], i) =>
              icon === "angle" ? (
                <Cmd key={i} $ml={-2}>
                  <Text w={31}>Angle</Text>
                  <AngleInput><Text w={13}>10</Text></AngleInput>
                </Cmd>
              ) : (
                <Cmd key={i} $off={mode === "off"}>
                  <Icon n={icon} />
                  <Text w={w}>{t}</Text>
                  {mode === "drop" && <Arrow $m="-3px 0 0 5px" />}
                </Cmd>
              )
            )}
          </OrientGrid>
        </GroupBody>
        <GroupLabel><Text w={32}>Orient</Text></GroupLabel>
      </Group>
      <Group $w={98}>
        <GroupBody $pl={11}>
          <Stack>
            <Cmd $gap={2}><Icon n="random" w={14} /><Text w={44.5}>Random</Text></Cmd>
            <Cmd $gap={2}><Icon n="rescale" w={14} /><Text w={39.5}>Rescale</Text></Cmd>
            <Cmd $gap={2}><Icon n="prefs" w={14} /><Text w={61}>Preferences</Text></Cmd>
          </Stack>
        </GroupBody>
        <GroupLabel><Text w={57}>Annotation</Text></GroupLabel>
      </Group>
      <Group $w={332}>
        <GroupBody $pl={3}>
          <Big w={49} icon="bigcube" iw={27} ih={29} lines={["Display"]} ws={[39]} arrow="below" />
          <Big w={41} icon="showmesh" iw={30} ih={30} lines={["Show", "Mesh"]} ws={[30, 29]} off />
          <Big w={67} icon="beam" iw={31} ih={25} lines={["Thick Shells", "and Beams"]} ws={[63, 57]} on />
          <Big w={46} icon="cross" iw={27} ih={31} lines={["Cross", "Section"]} ws={[29, 39]} />
          <Big w={76} icon="remote" iw={32} ih={32} lines={["Remote Point", "Connections"]} ws={[71, 67]} off />
          <Big w={45} icon="bluecube" iw={30} ih={30} lines={["Display", "Style"]} ws={[39, 25]} arrow="side" />
        </GroupBody>
        <GroupLabel><Text w={25}>Style</Text></GroupLabel>
      </Group>
      <Group $w={116}>
        <GroupBody $pl={6}>
          <Stack>
            <Cmd $on $w={100} $pl={5} $gap={4}><Icon n="showv" s={13} /><Text w={72.5}>Show Vertices</Text></Cmd>
            <Cmd $pl={5} $gap={4}><Icon n="closev" s={13} /><Text w={72}>Close Vertices</Text></Cmd>
            <Combo $w={104} $off><Text w={81}>1.2 (Auto Scale)</Text><Arrow $c="#b4b4b8" /></Combo>
          </Stack>
        </GroupBody>
        <GroupLabel><Text w={33}>Vertex</Text></GroupLabel>
      </Group>
      <Group $w={233}>
        <GroupBody $pl={9}>
          <Stack $w="124px">
            <Cmd $gap={3}><Icon n="direction" /><Text w={48.5}>Direction</Text></Cmd>
            <Cmd $gap={3}><Icon n="meshcon" /><Text w={94.5}>Mesh Connection</Text></Cmd>
            <Cmd $gap={3}><Icon n="thicken" /><Text w={41.5}>Thicken</Text></Cmd>
          </Stack>
          <ColorColumn>
            <Swatches>
              <Swatch $c="#0be90b" $b="#4aa03c" />
              <Swatch $c="#f8d060" $b="#b58c2c" />
            </Swatches>
            <Text w={29}>Color</Text>
            <Arrow $m="7px 0 0 10px" />
          </ColorColumn>
          <MiniGrid>
            {["0", "3", "1", "x", "2"].map((t) => (
              <Mini key={t}>
                <MiniBox><Text $size={9} $color="#aaa">{t}</Text></MiniBox>
                <Arrow $s={2.5} $c="#aaa" />
              </Mini>
            ))}
          </MiniGrid>
        </GroupBody>
        <GroupLabel><Text w={26}>Edge</Text></GroupLabel>
      </Group>
      <Group $w={211}>
        <GroupBody $pl={10}>
          <Stack>
            <ExplodeRow $h={36}>
              <Icon n="reset" w={14} h={15} />
              <Gap $w={4} />
              <Text w={28.5} $color="#a8a8aa">Reset</Text>
              <Gap $w={12} />
              <svg width="131" height="14" viewBox="0 0 131 14"><path d="M4.5 3H130" stroke="#7a7a7a" strokeWidth="1.6" /><path d="M4.5 2V10H0" stroke="#7a7a7a" strokeWidth="1.6" fill="none" /></svg>
            </ExplodeRow>
            <ExplodeRow $h={21}>
              <Icon n="assembly" w={14} h={15} />
              <Gap $w={4} />
              <Combo $w={146} $pl={3} $off><Text w={87}>Assembly Center</Text><Arrow $c="#b4b4b8" $s={2.5} /></Combo>
            </ExplodeRow>
          </Stack>
        </GroupBody>
        <GroupLabel><Text w={40}>Explode</Text></GroupLabel>
      </Group>
      <Group $w={61}>
        <GroupBody $pl={1}>
          <Big w={59} icon="viewports" iw={27} ih={31} lines={["Viewports"]} ws={[54]} arrow="below" />
        </GroupBody>
      </Group>
      <Group $w={56}>
        <GroupBody $pl={0}>
          <Big w={56} icon="showpanel" iw={32} ih={32} lines={["Show"]} ws={[30]} arrow="below" />
        </GroupBody>
        <GroupLabel><Text w={38}>Display</Text></GroupLabel>
      </Group>
    </RibbonBar>
  );
}

function Sidebar() {
  return (
    <Side>
      <PanelHead $h={20.5} $w="239px">
        <Text w={41} $size={12.5}>Outline</Text>
        <Dots $w={118} />
        <HeadButtons />
      </PanelHead>
      <TreePane>
        <TreeRow $level={0} $h={16.3}>
          <Gap $w={9} />
          <Icon n="book" />
          <TreeText><Text w={49} $bold $font={TREE} $color="#222">Project*</Text></TreeText>
        </TreeRow>
        {TREE_ROWS.map((r) => (
          <TreeRow key={r.t} $level={r.root ? 0 : r.l}>
            <Branch row={r} />
            <Icon n={r.i} />
            <TreeText $sel={r.sel}>
              <Text w={r.w} $bold={r.b} $font={TREE} $color={r.b ? "#222" : "#4a4a4c"}>{r.t}</Text>
            </TreeText>
          </TreeRow>
        ))}
      </TreePane>
      <HScroll />
      <PanelHead $h={21} $w="239px" $line>
        <Text w={161}>Details of "Total Deformation'</Text>
        <Gap $w={2} />
        <HeadButtons />
      </PanelHead>
      <DetailsBody>
        <DetailsTable>
          {DETAILS.map(([k, kw, v, vw, f = ""]) => (
            <DetailRow key={k}>
              <Gutter>
                {v === undefined && (
                  <svg width="10" height="10" viewBox="0 0 10 10"><rect x=".5" y=".5" width="9" height="9" fill="#fff" stroke="#999" /><path d="M2.5 5H7.5" stroke="#333" /></svg>
                )}
              </Gutter>
              <Cell $span={v === undefined} $last={v === undefined}>
                {f.includes("c") && <CheckBox />}
                <Text w={kw} $bold={v === undefined} $color={v === undefined ? "#222" : undefined}>{k}</Text>
              </Cell>
              {v !== undefined && (
                <Cell $last $gray={f.includes("g")}>{v && <Text w={vw}>{v}</Text>}</Cell>
              )}
            </DetailRow>
          ))}
        </DetailsTable>
        <VScroll />
      </DetailsBody>
    </Side>
  );
}

function View() {
  return (
    <Viewport>
      <Info>
        <InfoLine><Text w={109} $bold $size={12.5}>A: Static Structural</Text></InfoLine>
        <InfoLine><Text w={99.5}>Total Deformation</Text></InfoLine>
        <InfoLine><Text w={132}>Type: Total Deformation</Text></InfoLine>
        <InfoLine><Text w={52}>Unit: mm</Text></InfoLine>
        <InfoLine><Text w={48}>Time: 1 s</Text></InfoLine>
        <InfoLine><Text w={114}>16-03-2023 09:17 PM</Text></InfoLine>
      </Info>
      <Legend>
        <Bands>{BANDS.map((c) => <Band key={c} $c={c} />)}</Bands>
        <LegendLabels>
          {VALUES.map(([t, w, b]) => (
            <LegendLine key={t}><Text w={w} $bold={b}>{t}</Text></LegendLine>
          ))}
        </LegendLabels>
      </Legend>
      <Brand>
        <Text w={99} $size={31} $lh={35} $weight={800} $stroke={1} $font={`Inter, sans-serif`}>Ansys</Text>
        <Text w={70} $size={18} $lh={22} $weight={500} $ws={4} $font={`Inter, sans-serif`}>2021 R2</Text>
      </Brand>
      <CanvasItem $x={427} $y={157}><BikeFrame /></CanvasItem>
      <CanvasItem $x={1227} $y={427}><Triad /></CanvasItem>
      <CanvasItem $x={1245} $y={419}><Text $size={13} $color="#3a3ad8">Z</Text></CanvasItem>
      <CanvasItem $x={1341} $y={493}><Text $size={13} $color="#e05050">X</Text></CanvasItem>
      <CanvasItem $x={463} $y={543}>
        <Ruler>
          <RulerTop>
            <Text w={22}>0.00</Text><Gap $w={174.5} />
            <Text w={35}>450.00</Text><Gap $w={169.5} />
            <Text w={68}>900.00 (mm)</Text>
          </RulerTop>
          <RulerBar><i /><i /><i /><i /></RulerBar>
          <RulerTop>
            <Gap $w={94.5} /><Text w={35}>225.00</Text><Gap $w={169} /><Text w={35}>675.00</Text>
          </RulerTop>
        </Ruler>
      </CanvasItem>
    </Viewport>
  );
}

function Graph() {
  return (
    <GraphDock>
      <PanelHead $h={21} $line>
        <Text w={33}>Graph</Text>
        <Dots />
        <Gap $w={3} />
        <HeadButtons noMax />
        <Gap $w={8} />
      </PanelHead>
      <AnimBar>
        <Gap $w={9} />
        <svg width="6" height="21" viewBox="0 0 6 21"><path d="M1 0V21M3 1V21M5 0V21" stroke="#b8b8bc" strokeDasharray="1 2" /></svg>
        <Gap $w={12} />
        <Text w={58}>Animation</Text>
        <Gap $w={8} /><Icon n="first" w={15} h={15} />
        <Gap $w={7} /><Icon n="play" w={15} h={14} />
        <Gap $w={5} /><Toggle $on><Icon n="stop" s={14} /></Toggle>
        <Gap $w={4.5} /><Icon n="last" w={15} h={15} />
        <Gap $w={9} /><Toggle $on><Icon n="frameG" s={16} /></Toggle>
        <Gap $w={4} /><Icon n="frameB" s={16} />
        <ThinLine $h={22} $m="0 3px 0 5.5px" />
        <Combo $w={104} $h={23}><Text w={56}>20 Frames</Text><Arrow $s={4} $m="0 -2px 0 0" /></Combo>
        <Combo $w={105} $h={23}><Text w={67}>2 Sec (Auto)</Text><Arrow $s={4} $m="0 -1px 0 0" /></Combo>
        <ThinLine $h={22} $m="0 6px 0 2px" />
        <Icon n="exportv" s={16} />
        <ThinLine $h={22} $m="0 7px 0 5px" />
        <Icon n="zoomplay" s={16} /><Gap $w={7} /><Icon n="rgb" w={17} h={16} /><Gap $w={7} /><Icon n="scope" s={16} />
        <ThinLine $h={22} $m="0 6px 0 5px" />
        <Icon n="list1" s={16} /><Gap $w={7} /><Icon n="list2" s={16} />
        <ThinLine $h={22} $m="0 6px 0 6px" />
        <Icon n="wave" s={16} /><Gap $w={4} />
        <Combo $w={62} $h={23} $pl={3} $off><Text w={46}>3 Cycles</Text></Combo>
        <Gap $w={4} /><Text w={14.5} $bold>SA</Text>
        <Arrow $s={3.5} $c="#333" $m="10px 0 0 6px" />
      </AnimBar>
      <WhiteBand />
      <DockTabs>
        <DockTab $w={79}><Text w={67}>Tabular Data</Text></DockTab>
        <DockTab $w={45} $on><Text w={33}>Graph</Text></DockTab>
      </DockTabs>
    </GraphDock>
  );
}

export default function App() {
  return (
    <Window>
      <GlobalStyle />
      <TitleBar>
        <QuickAccess>
          <Icon n="gears" w={17} h={17} />
          <ThinLine $h={22} $m="-2px 6px 0 7px" />
          <Icon n="save" s={15} />
          <svg width="16" height="15" viewBox="0 0 16 15"><path d="M7.5 4.8H15" stroke="#555" strokeWidth="1.2" /><path d="M7.2 7H15.2L11.2 11.5Z" fill="#555" /></svg>
        </QuickAccess>
        <ContextTab><Text w={41} $color="#5a7ec2" $size={12.5}>Context</Text></ContextTab>
        <TitleText><Text w={332} $color="#5e5e60">A : Static Structural - Mechanical [Ansys Mechanical Enterprise]</Text></TitleText>
        <WinButtons>
          <svg width="96" height="16" viewBox="0 0 96 16">
            <path d="M2 9H11" stroke="#222" strokeWidth="2.4" />
            <path d="M38.5 6.5H45.5V12.5H38.5ZM41 6V3.5H47.5V9.5H46" fill="none" stroke="#222" strokeWidth="1.5" />
            <path d="M73.5 2 82.5 10.5M82.5 2 73.5 10.5" stroke="#222" strokeWidth="2.2" />
          </svg>
        </WinButtons>
      </TitleBar>
      <TabStrip>
        <Tab $w={58} $pad={21} $file><Text w={18}>File</Text></Tab>
        <Tab $w={68} $pad={22}><Text w={31.5}>Home</Text></Tab>
        <Tab $w={66} $pad={16}><Text w={33}>Result</Text></Tab>
        <Tab $w={66} $pad={12} $active><Text w={39.5}>Display</Text></Tab>
        <Tab $w={79} $pad={16}><Text w={49}>Selection</Text></Tab>
        <Tab $w={90} $pad={16}><Text w={63.5}>Automation</Text></Tab>
        <QuickLaunch><Text w={72} $color="#a9a9ab">Quick Launch</Text></QuickLaunch>
        <TabTools>
          <svg width="68" height="18" viewBox="0 0 68 18">
            <path d="M.5 12 6 6 11.5 12" fill="none" stroke={Y} strokeWidth="1.8" />
            <g transform="translate(20 1) scale(.9)">{ICONS.prefs}</g>
            <g transform="translate(43 1) scale(.92)">{ICONS.help}</g>
            <path d="M58 7H64L61 10.5Z" fill="#333" />
          </svg>
        </TabTools>
      </TabStrip>
      <Ribbon />
      <Work>
        <Sidebar />
        <Right>
          <View />
          <Graph />
        </Right>
      </Work>
      <StatusBar>
        <Icon n="message" w={17} h={15} />
        <Gap $w={2} />
        <Text w={72.5}>No Messages</Text><Gap $w={18.5} />
        <Text w={70}>No Selection</Text><Gap $w={22} />
        <svg width="9" height="5" viewBox="0 0 9 5"><path d="M0 5 4.5 0 9 5Z" fill="#fff" /></svg><Gap $w={6.5} />
        <Text w={168}>Metric (mm, kg, N, s, mV, mA)</Text><Gap $w={12} />
        <Text w={44}>Degrees</Text><Gap $w={12.5} />
        <Text w={28.5}>rad/s</Text><Gap $w={12.5} />
        <Text w={38.5}>Celsius</Text>
      </StatusBar>
      <Taskbar>
        <Weather>
          <svg width="27" height="27" viewBox="0 0 27 27">
            <path d="M12 1A9 9 0 1 0 21 12 8 8 0 0 1 12 1Z" fill="#f0b43c" />
            <path d="M6 21A5.5 5.5 0 0 1 7 11 7 7 0 0 1 20 10 5.6 5.6 0 0 1 22 21Z" fill="#a3c2f2" />
            <path d="M9 21 8 25M14 21 13 26M19 21 18 25" stroke="#3c96f0" strokeWidth="2" />
          </svg>
          <TwoLines>
            <Text w={26}>29°C</Text>
            <Text w={74} $color="#d8d4d4">Rain showers</Text>
          </TwoLines>
        </Weather>
        <TaskSlot $w={24}>
          <svg width="24" height="25" viewBox="0 0 24 25">
            <defs><linearGradient id="win" x1="0" y1="0" x2="1" y2="1"><stop offset="0" stopColor="#7fe3fd" /><stop offset="1" stopColor="#1296f0" /></linearGradient></defs>
            <path d="M0 0H11.5V12H0ZM12.5 0H24V12H12.5ZM0 13H11.5V25H0ZM12.5 13H24V25H12.5Z" fill="url(#win)" />
          </svg>
        </TaskSlot>
        <SearchPill>
          <svg width="15" height="15" viewBox="0 0 15 15"><circle cx="9" cy="6" r="4.8" fill="none" stroke="#fff" strokeWidth="1.5" /><path d="M5.5 9.5.8 14.2" stroke="#fff" strokeWidth="1.7" /></svg>
          <Text w={37}>Search</Text>
        </SearchPill>
        {["tasks", "chrome", "power", "folder", "whatsapp", "vee", "edge"].map((n) => (
          <TaskSlot key={n}><TaskIcon n={n} /></TaskSlot>
        ))}
        <TaskSlot><TaskIcon n="wb" /><Running /></TaskSlot>
        <TaskSlot>
          <RunningIcon>
            <svg width="31" height="30" viewBox="0 0 31 30">
              <g transform="translate(2 5)"><Chrome /></g>
              <path d="M14 4 19 0 26 1 30 6 28 13 22 17 16 12Z" fill="#0c0c10" />
              <path d="M25 3 30 5 29 13 25 14 26 9Z" fill="#e8c9bc" />
            </svg>
          </RunningIcon>
          <Running />
        </TaskSlot>
        <ActiveTile><TaskIcon n="mech" /><Running $w={16} /></ActiveTile>
        <Tray>
          <svg width="14" height="9" viewBox="0 0 14 9"><path d="M1 8 7 1.5 13 8" fill="none" stroke="#eee" strokeWidth="1.4" /></svg>
          <Gap $w={9} />
          <svg width="18" height="12" viewBox="0 0 18 12"><path d="M4 12A4 4 0 0 1 3.5 4.2 5.5 5.5 0 0 1 13.5 4 4 4 0 0 1 14.5 12Z" fill="#f2f2f2" /><path d="M7 12 13 5 17.5 8 15 12Z" fill="#cfcfd2" /></svg>
          <Gap $w={15} />
          <TwoLines $align="center"><Text w={24.5}>ENG</Text><Text w={13}>IN</Text></TwoLines>
          <Gap $w={18} />
          <svg width="17" height="14" viewBox="0 0 17 14"><g fill="none" stroke="#eee" strokeWidth="1.5"><path d="M.8 5.2Q8.5-2.2 16.2 5.2M3 7.7Q8.5 2.3 14 7.7M5.2 10.2Q8.5 7 11.8 10.2" /></g><circle cx="8.5" cy="12" r="1.6" fill="#eee" /></svg>
          <Gap $w={7.5} />
          <svg width="18" height="14" viewBox="0 0 18 14"><g fill="none" stroke="#eee" strokeWidth="1.3"><path d="M1 5H4L7.5 1.5V12.5L4 9H1ZM10 4.5Q11.8 7 10 9.5M12.3 2.7Q15 7 12.3 11.3M14.6 1Q18.4 7 14.6 13" /></g></svg>
          <Gap $w={7.5} />
          <svg width="18" height="12" viewBox="0 0 18 12"><rect x=".7" y="1" width="14" height="10" rx="2.5" fill="none" stroke="#eee" strokeWidth="1.4" /><path d="M16.5 4V8" stroke="#eee" strokeWidth="2" /><path d="M3.5 3.5H5V8.5H3.5Z" fill="#eee" /></svg>
          <Gap $w={14} />
          <TwoLines $align="flex-end"><Text w={50}>09:17 PM</Text><Text w={63}>16-03-2023</Text></TwoLines>
          <Badge><Text $size={11}>2</Text></Badge>
        </Tray>
      </Taskbar>
    </Window>
  );
}
